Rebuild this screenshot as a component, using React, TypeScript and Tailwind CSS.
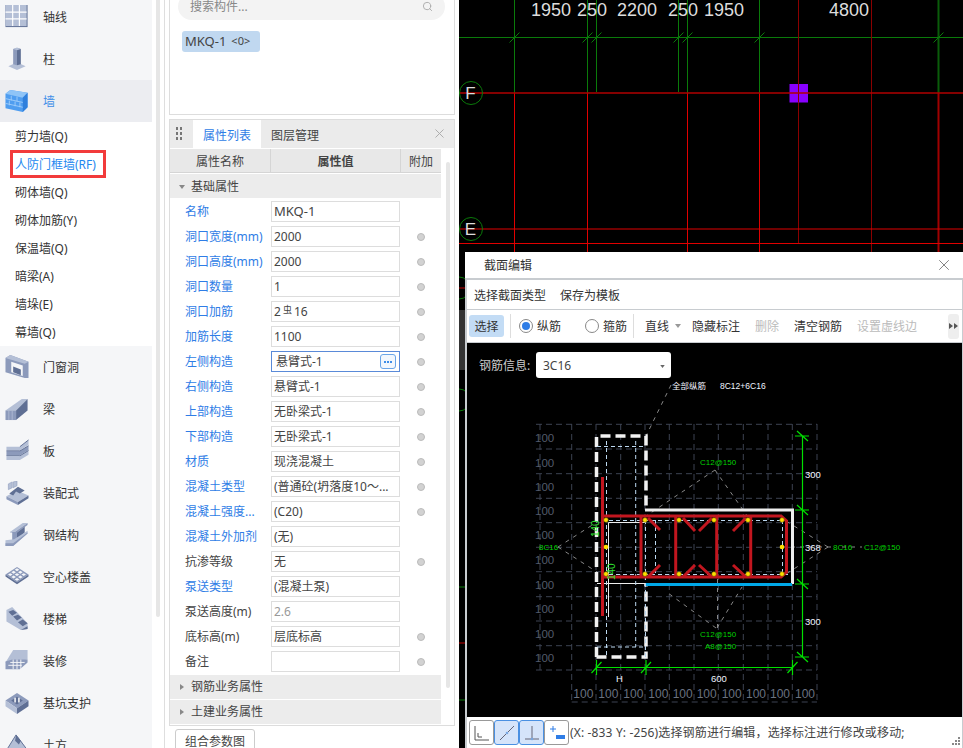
import type { ReactNode } from 'react';
import { Search, X } from 'lucide-react';

const L = '#b4bfd6';
const M = '#8c9abb';
const D = '#5f6f94';

const icons: Record<string, ReactNode> = {
  axis: (
    <>
      <rect x="0" y="0" width="23" height="23" fill={D} />
      <rect x="0" y="0" width="22" height="22" fill={L} />
      <path d="M7.5 0V22M14.5 0V22M0 7.5H22M0 14.5H22" stroke="#fff" strokeWidth="1.2" />
    </>
  ),
  column: (
    <>
      <path d="M3 20L12 16L21 20L12 24Z" fill={L} />
      <path d="M8 2L12 1V19L8 18Z" fill={M} />
      <path d="M12 1L16 2V18L12 19Z" fill={D} />
      <path d="M8 2L12 0.5L16 2L12 3.5Z" fill={L} />
    </>
  ),
  wall: (
    <>
      <path d="M0 5L5 1L23 4V19L18 24L0 20Z" fill="#4f9df0" />
      <path d="M0 5L5 1L23 4L18 9Z" fill="#8fc4f7" />
      <path d="M18 9L23 4V19L18 24Z" fill="#2f7fdc" />
      <path d="M0 10L18 14M0 15L18 19M6 7L6 12M12 8L12 13M4 12L4 17M10 13L10 18M15 14L15 19" stroke="#a5d0fa" strokeWidth="0.9" fill="none" />
    </>
  ),
  door: (
    <>
      <path d="M0 3L5 0L24 7V24L20 24L0 18Z" fill={M} />
      <path d="M6 7L18 11V22L6 18Z" fill="#f5f6f8" />
      <path d="M8 12L16 15V21L8 18Z" fill={D} />
      <path d="M0 3L5 0L24 7L20 9Z" fill={L} />
    </>
  ),
  beam: (
    <>
      <path d="M0 14L17 2H23L11 14Z" fill={L} />
      <path d="M11 24V14L23 2V14Z" fill={D} />
      <path d="M0 14H11V24H0Z" fill={M} />
      <path d="M3.5 14V24M7 14V24" stroke={L} strokeWidth="0.8" />
    </>
  ),
  slab: (
    <>
      <path d="M1 8L15 8L24 1V6L15 12H1Z" fill={L} />
      <path d="M1 12.5H15L24 7V11.5L15 17H1Z" fill={M} />
      <path d="M1 17.5H15L24 12V16.5L15 22H1Z" fill={L} />
      <path d="M15 8L24 1M15 12.5L24 7M15 17.5L24 12" stroke={D} strokeWidth="1" />
      <path d="M1 12.2H15M1 17.2H15" stroke={D} strokeWidth="0.8" />
    </>
  ),
  prefab: (
    <>
      <path d="M1 16L12 10L24 15L13 22Z" fill={L} />
      <path d="M1 16L13 22V25L1 19Z" fill={M} />
      <path d="M13 22L24 15V18L13 25Z" fill={D} />
      <path d="M4 13L13 6L20 10L15 13L11 11L8 15Z" fill={D} />
      <path d="M3 3L7 1V7L3 9ZM8 1L12 0V5L8 7Z" fill={L} stroke={M} strokeWidth="0.6" />
    </>
  ),
  steel: (
    <>
      <path d="M5 9L18 0H23L10 9Z" fill={L} />
      <path d="M5 9H10L23 0V2L12 10V18H7V10H5Z" fill={M} />
      <path d="M12 10L20 4V10L12 18Z" fill={D} />
      <path d="M0 18L9 17L23 8V11L8 24H0Z" fill={L} />
      <path d="M0 21H8L23 10V11L8 24H0Z" fill={M} />
    </>
  ),
  hollow: (
    <>
      <path d="M0 10L12 2L24 10L12 18Z" fill={M} />
      <path d="M0 10L12 18V20L0 12Z" fill={D} />
      <path d="M24 10L12 18V20L24 12Z" fill={D} />
      {[
        [12, 5],
        [8.5, 7.5],
        [15.5, 7.5],
        [5, 10],
        [12, 10],
        [19, 10],
        [8.5, 12.5],
        [15.5, 12.5],
        [12, 15],
      ].map(([x, y]) => (
        <path key={`${x}-${y}`} d={`M${x - 2.4} ${y}L${x} ${y - 1.5}L${x + 2.4} ${y}L${x} ${y + 1.5}Z`} fill="#f5f6f8" />
      ))}
    </>
  ),
  stairs: (
    <>
      <path d="M1 3L7 0L23 17V23L16 24L1 15Z" fill={L} />
      <path d="M3 5L8 3L12 6L7 9ZM8 10L13 8L17 11L12 14ZM13 16L18 13L23 17L18 20Z" fill={D} />
      <path d="M16 24L23 20V23Z" fill={D} />
    </>
  ),
  finish: (
    <>
      <path d="M0 14L8 1H23V11L7 14Z" fill={L} />
      <path d="M0 21V13L7 11H23V14L15 21Z" fill={M} />
      <path d="M5 14H20M3 17H17M8 11V21M12 11V21M16 11V21" stroke="#f5f6f8" strokeWidth="1" />
    </>
  ),
  pit: (
    <>
      <path d="M0 10L12 2L24 10L12 18Z" fill={M} />
      <path d="M0 10L12 18V24L0 16Z" fill={L} />
      <path d="M12 18L24 10V16L12 24Z" fill={D} />
      <path d="M6 10L12 6L18 10L12 14Z" fill={D} />
      <path d="M10 7V12M14 7V12" stroke="#fff" strokeWidth="1.5" />
    </>
  ),
  earth: (
    <>
      <path d="M1 18L11 2L16 8L23 18L12 24Z" fill={L} />
      <path d="M11 2L16 8L14 12L10 8Z" fill={D} />
      <path d="M1 18L11 2L23 18" fill="none" stroke={D} strokeWidth="1" />
    </>
  ),
};

const subItems = ['剪力墙(Q)', '人防门框墙(RF)', '砌体墙(Q)', '砌体加筋(Y)', '保温墙(Q)', '暗梁(A)', '墙垛(E)', '幕墙(Q)'];

const lowerItems = [
  ['door', '门窗洞'],
  ['beam', '梁'],
  ['slab', '板'],
  ['prefab', '装配式'],
  ['steel', '钢结构'],
  ['hollow', '空心楼盖'],
  ['stairs', '楼梯'],
  ['finish', '装修'],
  ['pit', '基坑支护'],
  ['earth', '土方'],
];

const props = [
  { name: '名称', value: 'MKQ-1', blue: true },
  { name: '洞口宽度(mm)', value: '2000', blue: true, dot: true },
  { name: '洞口高度(mm)', value: '2000', blue: true, dot: true },
  { name: '洞口数量', value: '1', blue: true, dot: true },
  { name: '洞口加筋', value: '2 16', bar: true, blue: true, dot: true },
  { name: '加筋长度', value: '1100', blue: true, dot: true },
  { name: '左侧构造', value: '悬臂式-1', blue: true, dot: true, editing: true },
  { name: '右侧构造', value: '悬臂式-1', blue: true, dot: true },
  { name: '上部构造', value: '无卧梁式-1', blue: true, dot: true },
  { name: '下部构造', value: '无卧梁式-1', blue: true, dot: true },
  { name: '材质', value: '现浇混凝土', blue: true, dot: true },
  { name: '混凝土类型', value: '(普通砼(坍落度10～...', blue: true, dot: true },
  { name: '混凝土强度...', value: '(C20)', blue: true, dot: true },
  { name: '混凝土外加剂', value: '(无)', blue: true },
  { name: '抗渗等级', value: '无', dot: true },
  { name: '泵送类型', value: '(混凝土泵)', blue: true },
  { name: '泵送高度(m)', value: '2.6', muted: true },
  { name: '底标高(m)', value: '层底标高', dot: true },
  { name: '备注', value: '', dot: true },
];

const NavRow = ({ icon, label, active }: { icon: string; label: string; active?: boolean }) => (
  <div className={`flex h-[42px] items-center pl-[5px] ${active ? 'bg-[#ecedf1] text-[#3f8ee8]' : 'text-[#333]'}`}>
    <svg viewBox="0 0 24 25" className="h-[24px] w-[24px] shrink-0">
      {icons[icon]}
    </svg>
    <span className="ml-[14px] pt-[2px] text-[12px]">{label}</span>
  </div>
);

const Sidebar = () => (
  <div className="flex h-full w-[169px] shrink-0 overflow-hidden bg-white">
    <div className="-mt-[4px] w-[152px] shrink-0">
      <div className="bg-[#f5f6f8]">
        <NavRow icon="axis" label="轴线" />
        <NavRow icon="column" label="柱" />
        <NavRow icon="wall" label="墙" active />
      </div>
      <div className="bg-white">
        {subItems.map((item) =>
          item === '人防门框墙(RF)' ? (
            <div key={item} className="ml-[10px] flex h-[28px] w-[96px] items-center whitespace-nowrap border-[3px] border-[#f23b3b] pl-[2px] pt-[2px] text-[12px] text-[#1e88f0]">
              {item}
            </div>
          ) : (
            <div key={item} className="flex h-[28px] items-center pl-[15px] pt-[2px] text-[12px] text-[#333]">
              {item}
            </div>
          )
        )}
      </div>
      <div className="bg-[#f5f6f8]">
        {lowerItems.map(([icon, label]) => (
          <NavRow key={label} icon={icon} label={label} />
        ))}
      </div>
    </div>
    <div className="ml-[4px] h-[617px] w-[4px] shrink-0 rounded-b-sm bg-[#e6e6e6]" />
    <div className="ml-[4px] h-full w-px bg-[#dedede]" />
  </div>
);

const PropRow = ({ p }: { p: (typeof props)[number] }) => (
  <div className="flex h-[25px] items-center">
    <div className={`w-[101px] shrink-0 whitespace-nowrap pl-[15px] text-[12px] ${p.blue ? 'text-[#2f7de6]' : 'text-[#444]'}`}>{p.name}</div>
    <div
      className={`flex h-[21px] w-[129px] shrink-0 items-center justify-between whitespace-nowrap border pr-[3px] ${
        p.editing ? 'border-[#5a8ad8] pl-[4px]' : 'border-[#ddd] pl-[2px]'
      } ${p.muted ? 'text-[#999]' : 'text-[#444]'} ${p.value === 'MKQ-1' ? 'text-[13px]' : 'text-[12px]'}`}
    >
      {p.bar ? (
        <span className="flex items-center">
          2<span className="mx-[2px] -mt-[3px] text-[9px]">虫</span>16
        </span>
      ) : (
        <span>{p.value}</span>
      )}
      {p.editing && (
        <span className="flex h-[15px] w-[16px] items-center justify-center gap-px rounded-[3px] border border-[#6aa5e8] bg-[#f2f7fd]">
          <span className="h-[2px] w-[2px] bg-[#3f8ee8]" />
          <span className="h-[2px] w-[2px] bg-[#3f8ee8]" />
          <span className="h-[2px] w-[2px] bg-[#3f8ee8]" />
        </span>
      )}
    </div>
    {p.dot && <span className="ml-[17px] h-[8px] w-[8px] rounded-full border border-[#bbb] bg-[#d2d2d2]" />}
  </div>
);

const GroupRow = ({ label, open }: { label: string; open?: boolean }) => (
  <div className={`flex h-[24px] w-[271px] items-center bg-[#ececec] pl-[9px] text-[12px] text-[#444] ${open ? 'pt-[2px]' : ''}`}>
    <svg viewBox="0 0 6 6" className="h-[6px] w-[6px]">
      <path d={open ? 'M0 1H6L3 5Z' : 'M1 0V6L5 3Z'} fill="#888" />
    </svg>
    <span className="ml-[6px]">{label}</span>
  </div>
);

const MiddlePanel = () => (
  <div className="flex h-full w-[290px] shrink-0 flex-col bg-white pr-[4px]">
    {/* component list */}
    <div className="-mt-[7px] h-[122px] shrink-0 border border-t-0 border-[#ddd] pl-[8px]">
      <div className="flex h-[27px] w-[267px] items-center justify-between rounded-full bg-[#f3f3f3] px-[12px] text-[12px] text-[#888]">
        <span>搜索构件...</span>
        <Search className="h-[11px] w-[11px] text-[#aaa]" />
      </div>
      <div className="ml-[4px] mt-[11px] flex h-[21px] w-[78px] items-center rounded-[3px] bg-[#c0d8f0] pl-[3px] text-[13px] text-[#444]">
        MKQ-1 <span className="ml-[5px] text-[11px]">&lt;0&gt;</span>
      </div>
    </div>
    {/* property panel */}
    <div className="relative mt-[4px] h-[607px] shrink-0 overflow-hidden border border-[#ddd]">
      <div className="flex h-[28px] items-stretch bg-[#ebebeb] text-[12px]">
        <div className="ml-[6px] mr-[11px] mt-[7px] grid h-[14px] grid-cols-2 gap-x-[2px] gap-y-[1px]">
          {[0, 1, 2, 3, 4, 5].map((i) => (
            <span key={i} className="h-[3px] w-[2px] bg-[#777]" />
          ))}
        </div>
        <div className="flex w-[68px] items-center justify-center bg-white pt-[3px] text-[#2f7de6]">属性列表</div>
        <div className="ml-[10px] flex items-center pt-[3px] text-[#444]">图层管理</div>
        <X className="ml-auto mr-[7px] mt-[6px] h-[15px] w-[15px] text-[#aaa]" strokeWidth={1.5} />
      </div>
      <div className="mt-px flex h-[24px] w-[271px] border-b border-[#d5d5d5] bg-[#e8e8e8] pt-0 text-[12px] text-[#444]">
        <div className="flex w-[101px] items-center justify-center border-r border-[#d5d5d5] pt-[3px]">属性名称</div>
        <div className="flex w-[130px] items-center justify-center border-r border-[#d5d5d5] pt-[3px] font-bold">属性值</div>
        <div className="flex flex-1 items-center justify-center pt-[3px]">附加</div>
      </div>
      <div className="mt-px">
        <GroupRow label="基础属性" open />
      </div>
      <div className="mt-[1px]">
        {props.map((p) => (
          <PropRow key={p.name} p={p} />
        ))}
      </div>
      <div className="mt-[1px]">
        <GroupRow label="钢筋业务属性" />
      </div>
      <div className="mt-px">
        <GroupRow label="土建业务属性" />
      </div>
      <div className="absolute left-[276px] top-[42px] h-[526px] w-[4px] rounded-sm bg-[#e6e6e6]" />
    </div>
    <div className="ml-[6px] mt-[3px] flex h-[26px] w-[80px] shrink-0 items-center justify-center rounded-[3px] border border-[#ccc] text-[12px] text-[#444]">
      组合参数图
    </div>
  </div>
);

const range = (n: number) => Array.from({ length: n }, (_, i) => i);

const Tick = ({ x, y }: { x: number; y: number }) => <path d={`M${x - 5} ${y + 5}L${x + 5} ${y - 5}`} stroke="#0a7a0a" strokeWidth="1" />;

const AxisCircle = ({ y, label }: { y: number; label: string }) => (
  <g>
    <circle cx="471" cy={y} r="11.5" fill="none" stroke="#0a7a0a" strokeWidth="1" />
    <text x="470.5" y={y + 6} textAnchor="middle" fontSize="17" fill="#ddd" fontFamily="Liberation Sans">
      {label}
    </text>
  </g>
);

const BackgroundCad = () => {
  const greens = [514.5, 587.5, 596.5, 678.5, 687.5, 759.5];
  return (
    <svg viewBox="459 0 504 748" className="block h-[748px] w-[504px]">
      {greens.map((x) => (
        <path key={x} d={`M${x} 0V${x === 678.5 || x === 596.5 ? 92 : 93}`} stroke="#0a7a0a" strokeWidth="1" />
      ))}
      <path d="M938.5 0V93" stroke="#0a5c0a" strokeWidth="2" />
      <path d="M459 37.5H963" stroke="#0a7a0a" strokeWidth="1" />
      {[514.5, 587.5, 596.5, 678.5, 687.5, 759.5, 938.5].map((x) => (
        <Tick key={x} x={x} y={37.5} />
      ))}
      <path d="M798.5 0V243M871.5 0V252" stroke="#8a0000" strokeWidth="1" />
      <rect x="789.5" y="84" width="18.5" height="18.5" fill="#8800ff" />
      <path d="M798.5 84V102.5" stroke="#8a0000" strokeWidth="1" />
      <path d="M514.5 93V252M587.5 93V252M687.5 93V252M759.5 93V252" stroke="#e00000" strokeWidth="1" />
      <path d="M938.5 93V252" stroke="#a00000" strokeWidth="2" />
      <path d="M459 93H963" stroke="#b00000" strokeWidth="1.5" />
      <path d="M459 229H963M459 243.5H963" stroke="#e00000" strokeWidth="1" />
      <AxisCircle y={93} label="F" />
      <AxisCircle y={229} label="E" />
      <circle cx="459" cy="288" r="11" fill="none" stroke="#0a7a0a" />
      <path d="M459 288H466" stroke="#c00000" />
      <rect x="459" y="310" width="7" height="60" fill="#333" />
      <circle cx="459" cy="400" r="11" fill="none" stroke="#0a7a0a" />
      <path d="M459 587H466M459 700H466" stroke="#0a7a0a" />
      <path d="M459 643H466" stroke="#c00000" />
      <g fontSize="18" fill="#ddd" fontFamily="Liberation Sans">
        <text x="531" y="15.5">1950</text>
        <text x="577" y="15.5">250</text>
        <text x="617" y="15.5">2200</text>
        <text x="668" y="15.5">250</text>
        <text x="704" y="15.5">1950</text>
        <text x="829" y="15.5">4800</text>
      </g>
    </svg>
  );
};

const SectionDrawing = () => {
  const vs = [571.7, 596, 620.7, 645, 669.3, 694, 718.3, 743.3, 768, 792.3, 817];
  const hs = [424.3, 449, 473.7, 498.3, 522.7, 547.3, 571.7, 596.7, 621, 645.7, 670];
  const leftLabels = [437, 462, 486, 510, 534, 559, 584, 608, 633, 657];
  const bottomLabels = [583.3, 608.3, 633.3, 658.3, 682.7, 706.7, 731.7, 756, 780, 805];
  const dotX = [606, 645, 679, 714, 748, 782];
  const stirrups = [641, 675.7, 716.7, 750.7];
  return (
    <svg viewBox="467 343 495 374" className="block h-[374px] w-[495px]">
      {/* grid */}
      <g stroke="#3c4352" strokeWidth="1" strokeDasharray="6 4" fill="none">
        {vs.map((x) => (
          <path key={x} d={`M${x} 424V702`} />
        ))}
        <path d="M540 424V670" />
        {hs.map((y) => (
          <path key={y} d={`M536 ${y}H817`} />
        ))}
        <path d="M571.7 702H817" />
      </g>
      <g fontSize="11.5" fill="#525a6a" fontFamily="Liberation Sans">
        {leftLabels.map((y) => (
          <text key={y} x="535" y={y + 4.5}>
            100
          </text>
        ))}
      </g>
      <g fontSize="12" fill="#6a7280" fontFamily="Liberation Sans" textAnchor="middle">
        {bottomLabels.map((x) => (
          <text key={x} x={x} y="697.5">
            100
          </text>
        ))}
      </g>
      {/* leaders */}
      <g stroke="#888" strokeWidth="1" strokeDasharray="4 5" fill="none">
        <path d="M671 385L646 436" />
        <path d="M558 547L597 522M558 547L597 572" />
        <path d="M715 470L646 516M715 470L748 517" />
        <path d="M716 628L668 593M717 628L742 587M717.5 628V577" />
        <path d="M828 547L786 521M828 547L786 574M831 547H782M842 547H862" />
      </g>
      {/* section outline */}
      <path d="M596.5 657V436H646V510" stroke="#f2f2f2" strokeWidth="3.5" strokeDasharray="10 5" fill="none" />
      <path d="M596.5 657H646V584" stroke="#f2f2f2" strokeWidth="3.5" strokeDasharray="10 5" fill="none" />
      <path d="M645 510H792.5V584" stroke="#eee" strokeWidth="3" fill="none" />
      <path d="M646 584.5H792" stroke="#00a8e8" strokeWidth="3" />
      <path d="M597 583.5H646M646 522.5H608.5V617" stroke="#eee" strokeWidth="1" fill="none" />
      {/* bar lines */}
      <g stroke="#bcd8f0" strokeWidth="1" strokeDasharray="4 3" fill="none">
        <path d="M606.5 441V655M635.7 441V647M597 446.5H646M597 647H646" />
        <path d="M602 520.5H790M602 574.5H790M645.5 520V660M655.5 520V575M782.5 520V575" />
      </g>
      <g stroke="#c2161f" strokeWidth="3" fill="none">
        <path d="M602.5 477V616" />
        <path d="M602 516H781L786.5 521V572L781 577H602" />
        {stirrups.map((x) => (
          <path key={x} d={`M${x} 516V577`} />
        ))}
        <path d="M648 518L660 530M683 518L695 531M712 518L699 531M746 518L733 531" />
        <path d="M660 565L648 577M695 565L683 577M699 565L712 577M733 565L746 577" />
      </g>
      {dotX.map((x) => (
        <g key={x}>
          <circle cx={x} cy="520" r="2.3" fill="#ffe000" stroke="#7a6a00" strokeWidth="0.6" />
          <circle cx={x} cy="574" r="2.3" fill="#ffe000" stroke="#7a6a00" strokeWidth="0.6" />
        </g>
      ))}
      <circle cx="606" cy="547" r="2.3" fill="#ffe000" />
      <circle cx="782" cy="547" r="2.3" fill="#ffe000" />
      {/* dimensions */}
      <g stroke="#00e000" strokeWidth="1.2" fill="none">
        <path d="M802.5 436V657" />
        {[436, 510, 584, 657].map((y) => (
          <path key={y} d={`M795 ${y}H809M797 ${y - 5}L808 ${y + 5}`} />
        ))}
        <path d="M596 667.5H793" />
        {[596.5, 646, 792.5].map((x) => (
          <path key={x} d={`M${x} 660V675M${x - 5} 673L${x + 5} 662`} />
        ))}
      </g>
      <g fontSize="10" fill="#30e030" fontFamily="Liberation Sans">
        <text transform="translate(599 537) rotate(-90)">140</text>
        <text transform="translate(615 580) rotate(-90)">140</text>
      </g>
      <g fontSize="9.5" fill="#f0f4ff" fontFamily="Liberation Sans">
        <text x="805" y="478">300</text>
        <text x="805" y="551">368</text>
        <text x="805" y="625">300</text>
        <text x="711" y="682">600</text>
        <text x="616" y="682">H</text>
        <text x="672" y="389" fontSize="8.5" fontFamily="Noto Sans CJK SC">全部纵筋</text>
        <text x="720" y="388.5" fontSize="8.5">8C12+6C16</text>
      </g>
      <g fontSize="8" fill="#00d000" fontFamily="Liberation Sans">
        <text x="700" y="464.5">C12@150</text>
        <text x="700" y="636.5">C12@150</text>
        <text x="705" y="648.5">A8@150</text>
        <text x="539" y="550">8C16</text>
        <text x="833" y="550">8C16</text>
        <text x="864" y="550">C12@150</text>
      </g>
    </svg>
  );
};

const StatusButton = ({ active, children }: { active?: boolean; children: ReactNode }) => (
  <div className={`flex h-[25px] w-[25px] items-center justify-center rounded-[3px] border ${active ? 'border-[#4a90e2] bg-[#d5e4fa]' : 'border-[#999] bg-white'}`}>
    <svg viewBox="0 0 20 20" className="h-[20px] w-[20px]">
      {children}
    </svg>
  </div>
);

const SectionDialog = () => (
  <div className="absolute left-[6px] top-[252px] flex h-[496px] w-[498px] flex-col bg-white">
    <div className="flex h-[26px] shrink-0 items-center justify-between pl-[19px] pr-[10px] text-[12px] text-[#333]">
      <span className="pt-[2px]">截面编辑</span>
      <X className="h-[18px] w-[18px] text-[#777]" strokeWidth={1.2} />
    </div>
    <div className="flex flex-1 flex-col border-x-2 border-t-2 border-[#c8ccd0] border-r-0 bg-[#c8ccd0] pr-px">
      <div className="flex h-[29px] shrink-0 items-center gap-[14px] bg-white pl-[7px] pt-[3px] text-[12px] text-[#333]">
        <span>选择截面类型</span>
        <span>保存为模板</span>
      </div>
      <div className="mt-px flex h-[32px] shrink-0 items-center whitespace-nowrap bg-white text-[12px] text-[#333]">
        <div className="ml-[2px] flex h-[22px] w-[35px] items-center justify-center rounded-[3px] bg-[#c3dcf5] pt-[2px]">选择</div>
        <div className="ml-[6px] h-[24px] w-px bg-[#ddd]" />
        <div className="ml-[8px] flex h-[14px] w-[14px] items-center justify-center rounded-full border border-[#888]">
          <span className="h-[8px] w-[8px] rounded-full bg-[#2f7de6]" />
        </div>
        <span className="ml-[4px] pt-[2px]">纵筋</span>
        <div className="ml-[24px] h-[14px] w-[14px] rounded-full border border-[#888]" />
        <span className="ml-[4px] pt-[2px]">箍筋</span>
        <div className="ml-[6px] h-[24px] w-px bg-[#ddd]" />
        <span className="ml-[11px] pt-[2px]">直线</span>
        <svg viewBox="0 0 6 4" className="ml-[6px] h-[4px] w-[6px]">
          <path d="M0 0H6L3 4Z" fill="#999" />
        </svg>
        <span className="ml-[11px] pt-[2px]">隐藏标注</span>
        <span className="ml-[15px] pt-[2px] text-[#bbb]">删除</span>
        <span className="ml-[15px] pt-[2px]">清空钢筋</span>
        <span className="ml-[15px] pt-[2px] text-[#bbb]">设置虚线边</span>
        <div className="ml-[31px] flex h-[25px] w-[11px] items-center justify-center rounded-[3px] bg-[#eee]">
          <svg viewBox="0 0 9 6" className="h-[6px] w-[9px]">
            <path d="M0 0L4 3L0 6ZM5 0L9 3L5 6Z" fill="#555" />
          </svg>
        </div>
      </div>
      <div className="relative mt-px h-[374px] shrink-0 bg-black">
        <SectionDrawing />
        <div className="absolute left-[12px] top-[9px] flex items-center text-[12px] text-[#ccc]">
          <span className="w-[57px] pt-[2px]">钢筋信息:</span>
          <div className="flex h-[26px] w-[135px] items-center justify-between rounded-[3px] bg-white pl-[7px] pr-[6px] pt-[2px] text-[#444]">
            3C16
            <svg viewBox="0 0 6 4" className="h-[3px] w-[5px]">
              <path d="M0 0H6L3 4Z" fill="#666" />
            </svg>
          </div>
        </div>
      </div>
      <div className="relative flex flex-1 items-center gap-0 whitespace-nowrap bg-white pl-[2px] text-[12px] text-[#444]">
        <StatusButton>
          <path d="M3 3V17H17M6 10V14H10" stroke="#555" fill="none" strokeWidth="1" />
        </StatusButton>
        <StatusButton active>
          <path d="M3 17L17 3" stroke="#667" strokeWidth="1" />
          <circle cx="10" cy="10" r="1.3" fill="#7aa7e0" />
        </StatusButton>
        <StatusButton active>
          <path d="M3 16H17M10 3V16" stroke="#667" strokeWidth="1" />
          <circle cx="10" cy="16" r="1.3" fill="#7aa7e0" />
        </StatusButton>
        <StatusButton>
          <path d="M3 6H9M6 3V9" stroke="#2f7de6" strokeWidth="1" />
          <rect x="9" y="12" width="9" height="4" fill="#2f7de6" />
        </StatusButton>
        <span className="ml-px tracking-[0.15px]">(X: -833 Y: -256)选择钢筋进行编辑，选择标注进行修改或移动;</span>
        <div className="absolute bottom-[3px] right-[2px] grid grid-cols-3 gap-px">
          {range(9).map((i) => (
            <span key={i} className={`h-[2px] w-[2px] ${[0, 1, 3].includes(i) ? 'bg-transparent' : 'bg-[#888]'}`} />
          ))}
        </div>
      </div>
    </div>
  </div>
);

export default function App() {
  return (
    <div className="flex h-[748px] w-[963px] overflow-hidden bg-white font-['Noto_Sans','Noto_Sans_CJK_SC',sans-serif]">
      <Sidebar />
      <MiddlePanel />
      <div className="relative flex-1 bg-black">
        <BackgroundCad />
        <SectionDialog />
      </div>
    </div>
  );
}
